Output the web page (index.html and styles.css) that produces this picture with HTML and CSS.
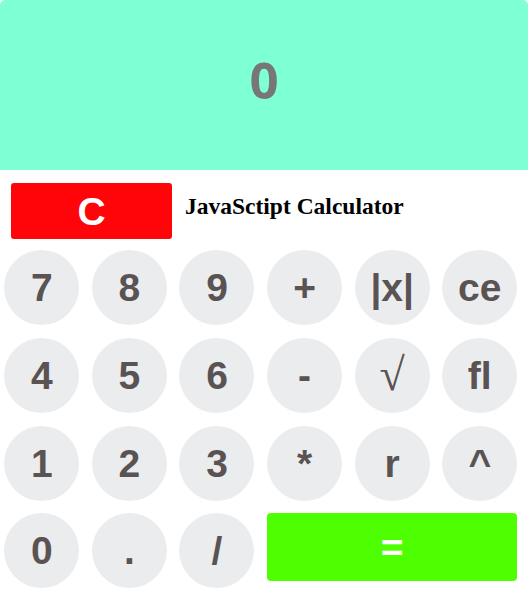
FILE: index.html
```html
<!DOCTYPE html>
<html>
<head>
<meta charset="utf-8">
<link rel="stylesheet" href="styles.css">
</head>
<body>
<div class="calc">
  <div class="display">0</div>
  <div class="top-row">
    <button class="clear">C</button>
    <h2 class="title">JavaSctipt Calculator</h2>
  </div>
  <div class="keys">
    <button class="key">7</button>
    <button class="key">8</button>
    <button class="key">9</button>
    <button class="key">+</button>
    <button class="key">|x|</button>
    <button class="key">ce</button>
    <button class="key">4</button>
    <button class="key">5</button>
    <button class="key">6</button>
    <button class="key">-</button>
    <button class="key sqrt">√</button>
    <button class="key">fl</button>
    <button class="key">1</button>
    <button class="key">2</button>
    <button class="key">3</button>
    <button class="key">*</button>
    <button class="key">r</button>
    <button class="key">^</button>
    <button class="key">0</button>
    <button class="key">.</button>
    <button class="key">/</button>
    <button class="equals">=</button>
  </div>
</div>
</body>
</html>
```
FILE: styles.css
```css
html {
  background: #ffffff;
}
body {
  margin: 0;
  background: #ffffff;
}
.calc {
  width: 528px;
}
.display {
  height: 170px;
  background: #7fffd4;
  border-radius: 5px 5px 0 0;
  display: flex;
  align-items: center;
  justify-content: center;
  font-family: "Open Sans", "Noto Sans", sans-serif;
  font-weight: 700;
  font-size: 51px;
  color: #777777;
  padding-bottom: 12px;
  box-sizing: border-box;
}
.top-row {
  display: flex;
  align-items: flex-start;
  padding: 13px 0 0 11px;
  height: 80px;
  box-sizing: border-box;
}
.clear {
  width: 161px;
  height: 56px;
  border: none;
  border-radius: 3px;
  background: #ff050a;
  color: #ffffff;
  font-family: "Liberation Sans", Arial, sans-serif;
  font-weight: 700;
  font-size: 39px;
  padding: 0;
  line-height: 1;
}
.title {
  margin: 10px 0 0 13px;
  font-family: "Liberation Serif", "Times New Roman", serif;
  font-weight: 700;
  font-size: 23.5px;
  color: #000000;
}
.keys {
  display: grid;
  grid-template-columns: repeat(6, 75px);
  grid-auto-rows: 75px;
  column-gap: 12.6px;
  row-gap: 12.8px;
  padding-left: 4.3px;
}
.key {
  width: 75px;
  height: 75px;
  border: none;
  border-radius: 50%;
  background: #ebecee;
  color: #5a5353;
  font-family: "Liberation Sans", Arial, sans-serif;
  font-weight: 700;
  font-size: 39px;
  padding: 0;
  line-height: 1;
}
.sqrt {
  font-family: "Liberation Serif", "Times New Roman", serif;
  font-weight: 400;
  font-size: 46px;
}
.equals {
  grid-column: span 3;
  height: 68px;
  border: none;
  border-radius: 4px;
  background: #4dff00;
  color: #ffffff;
  font-family: "Liberation Sans", Arial, sans-serif;
  font-weight: 700;
  font-size: 39px;
  padding: 0;
  line-height: 1;
}
```
